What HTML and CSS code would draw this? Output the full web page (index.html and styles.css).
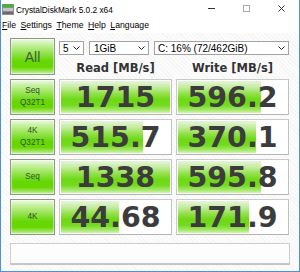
FILE: index.html
```html
<!DOCTYPE html>
<html lang="en">
<head>
<meta charset="UTF-8">
<meta name="viewport" content="width=device-width, initial-scale=1.0">
<title>CrystalDiskMark 5.0.2 x64</title>
<link rel="stylesheet" href="styles.css">
</head>
<body>

<div class="window">
    <div class="titlebar">
        <svg class="app-icon" width="12" height="11" viewBox="0 0 12 11">
            <rect x="0" y="0" width="12" height="3" fill="#4caf3a"/>
            <rect x="0" y="3" width="12" height="8" fill="#8d8d8d"/>
            <rect x="1" y="4" width="10" height="3" fill="#c4c4c4"/>
            <rect x="1" y="8" width="10" height="2" fill="#6a6a6a"/>
        </svg>
        <span class="title">CrystalDiskMark 5.0.2 x64</span>
        <div class="win-buttons">
            <span class="win-btn">
                <svg width="7" height="7" viewBox="0 0 7 7"><line x1="0" y1="3.5" x2="7" y2="3.5" stroke="#333" stroke-width="1"/></svg>
            </span>
            <span class="win-btn">
                <svg width="7" height="7" viewBox="0 0 7 7"><rect x="0.5" y="0.5" width="6" height="6" fill="none" stroke="#aaa" stroke-width="1"/></svg>
            </span>
            <span class="win-btn">
                <svg width="7" height="7" viewBox="0 0 7 7"><path d="M0.5 0.5 L6.5 6.5 M6.5 0.5 L0.5 6.5" stroke="#333" stroke-width="1"/></svg>
            </span>
        </div>
    </div>

    <div class="menubar">
        <span><u>F</u>ile</span>
        <span><u>S</u>ettings</span>
        <span><u>T</u>heme</span>
        <span><u>H</u>elp</span>
        <span><u>L</u>anguage</span>
    </div>

    <div class="client">
        <div class="grid">
            <div class="label all">All</div>
            <div class="top">
                <div class="selects">
                    <div class="select sel-count"><span>5</span><svg width="7" height="4" viewBox="0 0 7 4"><polyline points="0.5,0.5 3.5,3.5 6.5,0.5" fill="none" stroke="#222"/></svg></div>
                    <div class="select sel-size"><span>1GiB</span><svg width="7" height="4" viewBox="0 0 7 4"><polyline points="0.5,0.5 3.5,3.5 6.5,0.5" fill="none" stroke="#222"/></svg></div>
                    <div class="select sel-drive"><span>C: 16% (72/462GiB)</span><svg width="7" height="4" viewBox="0 0 7 4"><polyline points="0.5,0.5 3.5,3.5 6.5,0.5" fill="none" stroke="#222"/></svg></div>
                </div>
                <div class="heads">
                    <div>Read [MB/s]</div>
                    <div>Write [MB/s]</div>
                </div>
            </div>

            <!-- Seq Q32T1 -->
            <div class="label"><span>Seq</span><span>Q32T1</span></div>
            <div class="meter"><div class="bar" style="width:100%"></div><span class="val">1715</span></div>
            <div class="meter"><div class="bar" style="width:76%"></div><span class="val">596.2</span></div>

            <!-- 4K Q32T1 -->
            <div class="label"><span>4K</span><span>Q32T1</span></div>
            <div class="meter"><div class="bar" style="width:75%"></div><span class="val">515.7</span></div>
            <div class="meter"><div class="bar" style="width:72%"></div><span class="val">370.1</span></div>

            <!-- Seq -->
            <div class="label"><span>Seq</span></div>
            <div class="meter"><div class="bar" style="width:100%"></div><span class="val">1338</span></div>
            <div class="meter"><div class="bar" style="width:76%"></div><span class="val">595.8</span></div>

            <!-- 4K -->
            <div class="label"><span>4K</span></div>
            <div class="meter"><div class="bar" style="width:53%"></div><span class="val">44.68</span></div>
            <div class="meter"><div class="bar" style="width:65%"></div><span class="val">171.9</span></div>
        </div>

        <div class="comment"></div>
    </div>
</div>

</body>
</html>
```

FILE: styles.css
```css
body {
    margin: 0;
    padding: 0;
    font-family: "Liberation Sans", Arial, sans-serif;
    background-color: #fff;
}
.window {
    width: 300px;
    height: 272px;
    box-sizing: border-box;
    border: 1px solid #4a92dc;
    border-top: 0;
    background-color: #fff;
    display: flex;
    flex-direction: column;
}
.titlebar {
    height: 17px;
    display: flex;
    align-items: center;
    padding-left: 1px;
}
.app-icon {
    margin-top: 1px;
    flex-shrink: 0;
}
.title {
    margin-left: 2px;
    font-size: 8.3px;
    color: #000;
    margin-top: 2px;
}
.win-buttons {
    margin-left: auto;
    display: flex;
    height: 100%;
}
.win-btn {
    width: 35px;
    display: flex;
    align-items: center;
    justify-content: center;
}
.menubar {
    height: 16px;
    display: flex;
    align-items: center;
    gap: 4.5px;
    padding-left: 1px;
    font-size: 8.7px;
    color: #000;
}
.menubar u {
    text-decoration-thickness: 1px;
}
.client {
    flex: 1;
    padding: 5px 9px 0 9px;
    background-color: #f7f7f7;
    background-image: repeating-linear-gradient(45deg, #f5f5f5 0, #f5f5f5 1px, #fcfcfc 1px, #fcfcfc 3px);
}
.grid {
    display: grid;
    grid-template-columns: 45px 113px 113px;
    grid-template-rows: 37px repeat(4, 36px);
    column-gap: 4px;
    row-gap: 4px;
}
.label {
    box-sizing: border-box;
    border: 1px solid #8e968a;
    background: linear-gradient(to bottom, #eef9e6 0%, #c2ef98 18%, #8fe248 42%, #67d806 62%, #66d700 80%, #9de65c 92%, #cdf2ae 100%);
    box-shadow: inset 0 0 0 1px rgba(255, 255, 255, 0.45);
    display: flex;
    flex-direction: column;
    align-items: center;
    justify-content: center;
    font-size: 8.2px;
    line-height: 12.5px;
    color: #34502a;
}
.label.all {
    font-size: 14px;
    line-height: 16px;
    color: #465a3a;
}
.top {
    grid-column: 2 / 4;
}
.selects {
    display: flex;
    gap: 5px;
    margin-top: 3px;
}
.select {
    height: 14px;
    box-sizing: border-box;
    border: 1px solid #a2a2a2;
    background-color: #fff;
    display: flex;
    align-items: center;
    justify-content: space-between;
    padding: 0 3px 0 3px;
    font-size: 10px;
    color: #000;
}
.sel-count {
    width: 25px;
}
.sel-size {
    width: 60px;
    padding-left: 4px;
}
.sel-drive {
    width: 135px;
}
.heads {
    display: grid;
    grid-template-columns: 113px 113px;
    column-gap: 4px;
    margin-top: 6px;
    text-align: center;
    font-family: "DejaVu Sans", sans-serif;
    font-weight: bold;
    font-size: 11.5px;
    line-height: 14px;
    color: #333;
}
.meter {
    position: relative;
    box-sizing: border-box;
    border: 1px solid #cacaca;
    border-bottom-color: #b4b4b4;
    border-right-color: #c0c0c0;
    background-color: #fff;
    padding: 1px;
}
.bar {
    height: 100%;
    background: linear-gradient(to bottom, #e6f4dc 0%, #c4ec9e 20%, #92e04a 40%, #6fd816 58%, #74da1e 76%, #a9ea72 92%, #d2f5b4 100%);
}
.val {
    position: absolute;
    top: 0;
    left: 0;
    right: 0;
    bottom: 0;
    display: flex;
    align-items: center;
    justify-content: center;
    font-family: "DejaVu Sans", sans-serif;
    font-weight: bold;
    font-size: 28.5px;
    color: #3c3c3c;
}
.comment {
    margin-top: 8px;
    height: 22px;
    box-sizing: border-box;
    border: 1px solid #cdcdcd;
    border-bottom: 2px solid #c4c4c4;
    background-color: #fdfdfd;
}
```
